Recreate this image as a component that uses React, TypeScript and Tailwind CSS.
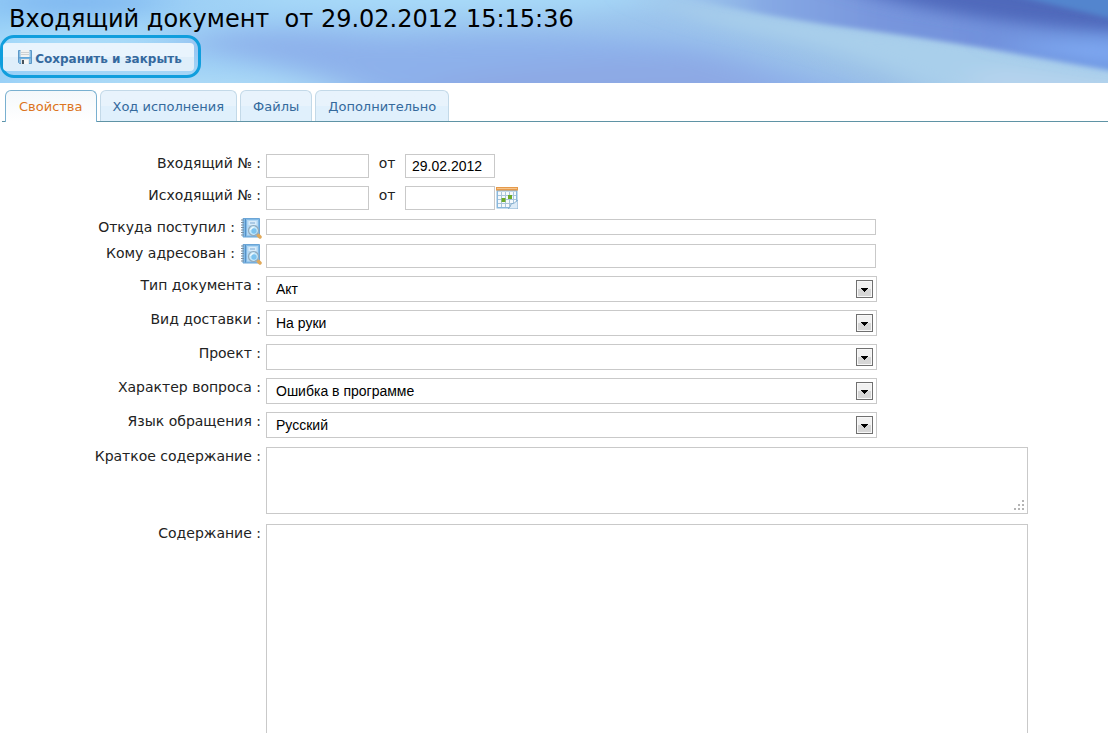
import { useState, type ReactNode } from "react";

const tabs = ["Свойства", "Ход исполнения", "Файлы", "Дополнительно"];

const selects = [
  { id: "doc-type", label: "Тип документа :", options: ["Акт", "Письмо"] },
  { id: "delivery", label: "Вид доставки :", options: ["На руки", "Почта"] },
  { id: "project", label: "Проект :", options: [""] },
  { id: "question", label: "Характер вопроса :", options: ["Ошибка в программе", "Консультация"] },
  { id: "language", label: "Язык обращения :", options: ["Русский", "English"] },
];

const box = "border border-[#c9c9c9] bg-white text-black outline-none";

function HeaderArt() {
  return (
    <svg className="absolute inset-0 h-full w-full" viewBox="0 0 1108 83" preserveAspectRatio="none" aria-hidden="true">
      <defs>
        <linearGradient id="base" x1="0" x2="1" y1="0" y2="0">
          <stop offset="0" stopColor="#95cef7" />
          <stop offset="0.12" stopColor="#a0d4f7" />
          <stop offset="0.3" stopColor="#9cccf4" />
          <stop offset="0.6" stopColor="#9bc3ec" />
          <stop offset="0.8" stopColor="#9cc2e7" />
          <stop offset="1" stopColor="#b4d4ee" />
        </linearGradient>
        <linearGradient id="deep" gradientUnits="userSpaceOnUse" x1="650" x2="1108" y1="0" y2="0">
          <stop offset="0" stopColor="#9cc8ee" stopOpacity="0" />
          <stop offset="0.25" stopColor="#86a9e4" />
          <stop offset="0.5" stopColor="#7896dd" />
          <stop offset="0.75" stopColor="#7191dc" />
          <stop offset="1" stopColor="#7098e2" />
        </linearGradient>
        <filter id="soft" x="-20%" y="-60%" width="140%" height="220%">
          <feGaussianBlur stdDeviation="28 11" />
        </filter>
        <filter id="band" x="-20%" y="-60%" width="140%" height="220%">
          <feGaussianBlur stdDeviation="20 7" />
        </filter>
        <filter id="edge" x="-10%" y="-20%" width="120%" height="140%">
          <feGaussianBlur stdDeviation="6 2.5" />
        </filter>
      </defs>
      <rect width="1108" height="83" fill="url(#base)" />
      <g filter="url(#soft)">
        <path d="M190 36 Q280 24 380 38 Q540 28 700 44 L960 120 L400 120 Q320 62 190 50Z" fill="#8db1eb" />
        <path d="M430 80 Q600 54 720 60 L850 120 L430 120Z" fill="#8da9e4" />
        <ellipse cx="80" cy="2" rx="90" ry="13" fill="#7db5f0" />
        <ellipse cx="60" cy="44" rx="90" ry="9" fill="#b6e4fb" />
        <ellipse cx="170" cy="92" rx="180" ry="14" fill="#b0dcf6" />
        <ellipse cx="450" cy="-4" rx="220" ry="16" fill="#a9dbf9" />
      </g>
      <g filter="url(#band)">
        <path d="M640 -6 Q740 14 850 26 Q980 40 1140 70 V100 H960 Q860 54 760 34 Q700 22 640 -6Z" fill="#a9cfeb" />
        <path d="M980 66 L1140 84 V110 H960Z" fill="#b5d3ed" />
      </g>
      <g filter="url(#edge)">
        <path d="M650 -12 Q730 10 830 25 Q960 42 1130 74 V-12Z" fill="url(#deep)" />
      </g>
      <g filter="url(#band)">
        <path d="M830 -20 Q930 22 1150 34 V-20Z" fill="#5069bb" />
        <path d="M1000 44 Q1060 54 1130 66 V46 Q1060 40 1000 44Z" fill="#7fa9f2" />
      </g>
      <g filter="url(#edge)">
        <path d="M1000 -8 L1125 22 V-8Z" fill="#5285ce" />
      </g>
    </svg>
  );
}

function SaveIcon() {
  return (
    <svg className="h-4 w-4 shrink-0" viewBox="0 0 16 16" aria-hidden="true">
      <path d="M1.5 1.5h13v13h-12l-1-1z" fill="#86bce3" stroke="#5c98c8" />
      <path d="M3.500 1h9v7h-9z" fill="#f1f2f2" />
      <path d="M4 3.500h8M4 5.500h8" stroke="#cdd0d2" />
      <path d="M2 8h12v1.500H2z" fill="#5fa5da" />
      <path d="M4 10h8v5H4z" fill="#e2e5e7" />
      <path d="M5 11h2v4H5z" fill="#46535e" />
      <path d="M7 11h4v4H7z" fill="#f7f7f6" />
    </svg>
  );
}

function BookIcon() {
  return (
    <svg className="h-[22px] w-[22px]" viewBox="0 0 22 22" aria-hidden="true">
      <path d="M3 1.500h16.500v18.500H3z" fill="#82bae6" stroke="#6ba5d6" />
      <path d="M5.500 2v17.500" stroke="#5590c6" />
      <path d="M7 3h11v15.500H7z" fill="#b3d8f4" />
      <path d="M8.500 4h8v4h-8z" fill="#d9ecfa" />
      <path d="M10 6h5" stroke="#7da9d2" />
      <path d="M1 3h3M1 5.500h3M1 8h3M1 10.500h3M1 13h3M1 15.500h3M1 18h3" stroke="#7c8f9f" />
      <path d="M18 18l2 2" stroke="#e0a95a" strokeWidth="3.500" strokeLinecap="round" />
      <circle cx="13.500" cy="13.500" r="5" fill="#c3e8fb" stroke="#93aabb" strokeWidth="1.200" />
      <circle cx="14" cy="14" r="2.700" fill="#7cc2ee" />
      <path d="M10.500 13q.5-2.500 3-2.500" stroke="#fff" fill="none" />
    </svg>
  );
}

function CalendarIcon() {
  return (
    <svg className="h-[22px] w-[22px]" viewBox="0 0 22 22" aria-hidden="true">
      <path d="M.5 1h21v20.500H.5z" fill="#8ab8dc" />
      <path d="M0 0h22v3.500H0z" fill="#e59a4c" />
      <path d="M1 1h20v1H1z" fill="#f6c58b" />
      <path d="M2 4.500h18V20H2z" fill="#f5f9fc" />
      <path d="M2 8.500h18M2 12.500h18M2 16.500h18M5.500 5v15M9.500 5v15M13.500 5v15M17.500 5v15" stroke="#a9c5da" />
      <path d="M5.500 11h4v4h-4zM12 8h4v4h-4z" fill="#6dab2b" />
      <path d="M12 22q3-2 3-5 3 0 7-4v9z" fill="#dcebf7" stroke="#86afd0" />
    </svg>
  );
}

function Label({ htmlFor, children }: { htmlFor: string; children: ReactNode }) {
  return (
    <label htmlFor={htmlFor} className="min-w-0 flex-1 pr-px text-right text-sm leading-[18px] whitespace-nowrap text-[#222]">
      {children}
    </label>
  );
}

function Row({ id, label, icon, children }: { id: string; label: string; icon?: ReactNode; children: ReactNode }) {
  return (
    <div className="flex items-start gap-1">
      <div className="flex w-[262px] shrink-0 items-start gap-1">
        <Label htmlFor={id}>{label}</Label>
        {icon}
      </div>
      {children}
    </div>
  );
}

function Lookup({ name }: { name: string }) {
  return (
    <button type="button" aria-label={name} className="-mb-0.5 flex h-5 w-[22px] items-center">
      <BookIcon />
    </button>
  );
}

export default function App() {
  const [active, setActive] = useState(0);

  return (
    <div className="flex min-h-screen flex-col bg-white font-['DejaVu_Sans',Verdana,sans-serif]">
      <header className="relative h-[83px] overflow-hidden">
        <HeaderArt />
        <div className="relative">
          <h1 className="h-[35px] pl-[9px] text-2xl leading-[38px] whitespace-pre text-black">
            Входящий документ  от 29.02.2012 15:15:36
          </h1>
          <div className="inline-flex h-[43px] items-center rounded-[14px] border-[3px] border-[#109edd] pr-1">
            <button
              type="button"
              className="flex h-7 w-[191px] items-center justify-center gap-0.5 rounded bg-linear-to-b from-[#e9f4fd] from-50% to-[#dfeefa] to-50% pl-0.5 text-xs font-bold whitespace-nowrap text-[#35699e]"
            >
              <SaveIcon />
              <span className="pt-1">Сохранить и закрыть</span>
            </button>
          </div>
        </div>
      </header>

      <nav className="ml-0.5 flex h-[39px] items-end gap-[3px] border-b border-[#5f93a5] pl-[3px]" role="tablist">
        {tabs.map((tab, i) => (
          <button
            key={tab}
            type="button"
            role="tab"
            aria-selected={i === active}
            onClick={() => setActive(i)}
            className={
              i === active
                ? "-mb-px h-8 rounded-t-md border border-b-0 border-[#79b0d0] bg-linear-to-b from-[#f4f8fb] to-white px-[13px] text-[13px] text-[#dc7420]"
                : "h-[31px] rounded-t-md border border-b-0 border-[#c3d9e8] bg-linear-to-b from-[#e8f3fc] from-50% to-[#e0f0fc] to-50% px-3 pt-px text-[13px] text-[#356a9c]"
            }
          >
            {tab}
          </button>
        ))}
      </nav>

      <form className="flex flex-1 flex-col pt-8 pr-20" onSubmit={(e) => e.preventDefault()}>
        <div className="flex flex-col gap-2">
          <Row id="in-no" label="Входящий № :">
            <input id="in-no" className={`h-6 w-[103px] px-1.5 ${box}`} />
            <label htmlFor="in-date" className="w-7 text-center text-sm leading-[18px] text-[#222]">от</label>
            <input
              id="in-date"
              defaultValue="29.02.2012"
              className={`h-6 w-[90px] px-1.5 font-['Liberation_Sans',Arial,sans-serif] text-sm ${box}`}
            />
          </Row>
          <Row id="out-no" label="Исходящий № :">
            <input id="out-no" className={`h-6 w-[103px] px-1.5 ${box}`} />
            <label htmlFor="out-date" className="w-7 text-center text-sm leading-[18px] text-[#222]">от</label>
            <div className="flex items-center gap-px">
              <input
                id="out-date"
                className={`h-6 w-[90px] px-1.5 font-['Liberation_Sans',Arial,sans-serif] text-sm ${box}`}
              />
              <button type="button" aria-label="Календарь">
                <CalendarIcon />
              </button>
            </div>
          </Row>
          <Row id="source" label="Откуда поступил :" icon={<Lookup name="Выбрать отправителя" />}>
            <div className="flex h-[18px] w-[610px] items-center">
              <input id="source" className={`h-4 w-full px-2 text-xs ${box}`} />
            </div>
          </Row>
          <Row id="addressee" label="Кому адресован :" icon={<Lookup name="Выбрать адресата" />}>
            <input id="addressee" className={`h-6 w-[610px] px-2 text-sm ${box}`} />
          </Row>
          {selects.map((s) => (
            <Row key={s.id} id={s.id} label={s.label}>
              <div className="relative w-[611px]">
                <select
                  id={s.id}
                  className={`block h-[26px] w-full appearance-none px-[9px] font-['Liberation_Sans',Arial,sans-serif] text-sm ${box}`}
                >
                  {s.options.map((o) => (
                    <option key={o}>{o}</option>
                  ))}
                </select>
                <span className="pointer-events-none absolute top-1 right-1 flex h-[18px] w-[17px] items-center justify-center border border-[#707070] bg-linear-to-b from-[#f1f1f1] from-50% to-[#d6d6d6] to-50% pt-0.5 shadow-[inset_0_0_0_1px_#f8f8f8]">
                  <svg className="h-1 w-[7px]" viewBox="0 0 7 4" shapeRendering="crispEdges" aria-hidden="true">
                    <path d="M0 0h7v1H0zM1 1h5v1H1zM2 2h3v1H2zM3 3h1v1H3z" />
                  </svg>
                </span>
              </div>
            </Row>
          ))}
        </div>

        <div className="mt-[9px] flex flex-1 flex-col gap-[10px]">
          <Row id="summary" label="Краткое содержание :">
            <div className="relative min-w-0 flex-1">
              <textarea id="summary" className={`block h-[67px] w-full resize-none p-2 text-sm ${box}`} />
              <svg
                className="pointer-events-none absolute right-1 bottom-1 h-2.5 w-2.5"
                viewBox="0 0 10 10"
                shapeRendering="crispEdges"
                aria-hidden="true"
              >
                <path
                  d="M8 0h2v2H8zM4 4h2v2H4zM8 4h2v2H8zM0 8h2v2H0zM4 8h2v2H4zM8 8h2v2H8z"
                  fill="#b4b4b4"
                />
              </svg>
            </div>
          </Row>
          <div className="flex flex-1 items-stretch gap-1">
            <div className="flex w-[262px] shrink-0 items-start">
              <Label htmlFor="content">Содержание :</Label>
            </div>
            <textarea id="content" className={`min-h-[209px] min-w-0 flex-1 resize-none p-2 text-sm ${box} border-b-0`} />
          </div>
        </div>
      </form>
    </div>
  );
}
